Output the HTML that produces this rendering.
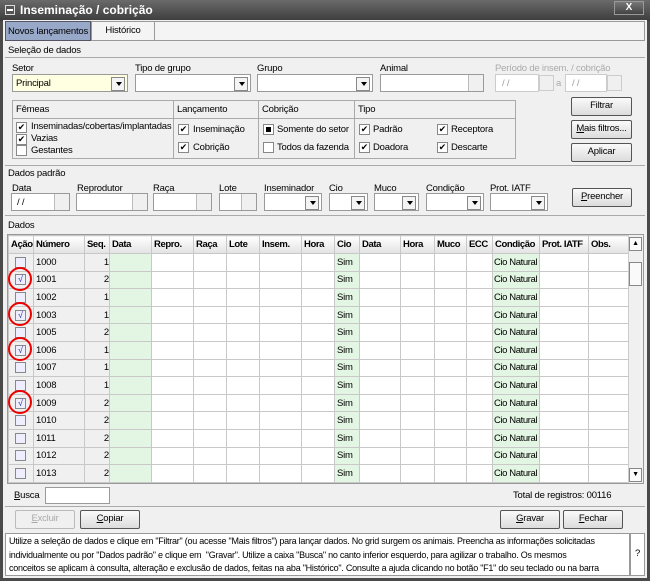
<!DOCTYPE html><html><head><meta charset="utf-8"><style>
*{box-sizing:border-box;margin:0;padding:0}
body{width:650px;height:581px;overflow:hidden;font-family:"Liberation Sans",Arial,sans-serif;font-size:9.5px;letter-spacing:-0.2px;color:#000;background:#4a4a4a;position:relative}
.a{position:absolute}
.win{left:3px;top:20px;width:644px;height:558px;background:#f0f0f0}
.tb{left:0;top:0;width:650px;height:21px;background:linear-gradient(#6a6a6a,#3c3c3c);color:#fff;font-size:12px;font-weight:bold;letter-spacing:0}
.lbl{position:absolute;white-space:nowrap}
.fld{position:absolute;background:#fff;border:1px solid #9a9a9a;height:18px;white-space:nowrap}
.cmb::after{content:"";position:absolute;right:2px;top:2px;width:12px;height:12px;background:#f4f4f4;border:1px solid #888}
.cmb::before{content:"";position:absolute;right:5px;top:7px;border-left:3px solid transparent;border-right:3px solid transparent;border-top:4px solid #000;z-index:2}
.sb{position:absolute;right:0;top:0;width:15px;height:16px;background:#f0f0f0;border-left:1px solid #bbb}
.btn{position:absolute;border:1px solid #555;border-radius:2px;background:linear-gradient(#fafafa,#dcdcdc);text-align:center;line-height:16px;height:19px;white-space:nowrap}
.cb{position:absolute;width:11px;height:11px;border:1px solid #888;background:#fff;font-size:9px;line-height:9px;text-align:center;letter-spacing:0}
.grp{position:absolute;border:1px solid #aaa}
table{border-collapse:collapse;position:absolute;left:8px;top:235px;width:620px;table-layout:fixed}
td,th{border:1px solid #c8c8c8;height:17.6px;padding:0 0 0 2px;white-space:nowrap;overflow:hidden}
th{background:linear-gradient(#fff,#e2e2e2);font-weight:bold;text-align:left;height:18px;letter-spacing:-0.4px}
td.g{background:#f0f0f0}td.gr{background:#e3f5e3}
td.cn{letter-spacing:-0.4px;padding-left:1px}
.circ{position:absolute;width:24px;height:24px;border:2px solid #e00;border-radius:50%}
</style></head><body>
<div class="a tb"><div class="a" style="left:5px;top:5px;width:10px;height:10px;border:1px solid #ddd;background:#555"></div><div class="a" style="left:7px;top:9px;width:6px;height:2px;background:#fff"></div><span class="a" style="left:20px;top:3px">Inseminação / cobrição</span>
<div class="a" style="left:614px;top:1px;width:30px;height:14px;border:1px solid #999;background:linear-gradient(#777,#444);text-align:center;font-size:10px;line-height:12px">X</div></div>
<div class="a win"></div>
<div class="a" style="left:5px;top:21px;width:640px;height:20px;background:#f4f4f4;border:1px solid #999"></div>
<div class="a" style="left:5px;top:21px;width:86px;height:20px;background:#98a8c8;border:1px solid #556;text-align:center;line-height:19px;white-space:nowrap">Novos lançamentos</div>
<div class="a" style="left:91px;top:21px;width:64px;height:20px;border:1px solid #999;text-align:center;line-height:18px">Histórico</div>
<div class="lbl" style="left:8px;top:45px">Seleção de dados</div>
<div class="a" style="left:5px;top:57px;width:640px;height:1px;background:#aaa"></div>
<div class="lbl" style="left:12px;top:63px">Setor</div>
<div class="lbl" style="left:135px;top:63px">Tipo de grupo</div>
<div class="lbl" style="left:257px;top:63px">Grupo</div>
<div class="lbl" style="left:380px;top:63px">Animal</div>
<div class="lbl" style="left:495px;top:63px;color:#aaa">Período de insem. / cobrição</div>
<div class="fld cmb" style="left:12px;top:74px;width:116px;background:#ffffe1;padding:3px 3px">Principal</div>
<div class="fld cmb" style="left:135px;top:74px;width:116px"></div>
<div class="fld cmb" style="left:257px;top:74px;width:116px"></div>
<div class="fld" style="left:380px;top:74px;width:104px"><div class="sb"></div></div>
<div class="fld" style="left:495px;top:74px;width:44px;border-color:#ccc;color:#999;padding:3px 6px">/ /<div class="sb" style="right:-16px;border:1px solid #ccc"></div></div>
<div class="lbl" style="left:556px;top:78px;color:#aaa">a</div>
<div class="fld" style="left:565px;top:74px;width:42px;border-color:#ccc;color:#999;padding:3px 6px">/ /<div class="sb" style="right:-16px;border:1px solid #ccc"></div></div>
<div class="grp" style="left:12px;top:100px;width:504px;height:59px"></div>
<div class="a" style="left:12px;top:118px;width:504px;height:1px;background:#aaa"></div>
<div class="a" style="left:173px;top:100px;width:1px;height:59px;background:#aaa"></div>
<div class="a" style="left:258px;top:100px;width:1px;height:59px;background:#aaa"></div>
<div class="a" style="left:354px;top:100px;width:1px;height:59px;background:#aaa"></div>
<div class="lbl" style="left:16px;top:104px">Fêmeas</div><div class="lbl" style="left:177px;top:104px">Lançamento</div><div class="lbl" style="left:262px;top:104px">Cobrição</div><div class="lbl" style="left:358px;top:104px">Tipo</div>
<div class="cb" style="left:16px;top:122px">✔</div><div class="lbl" style="left:31px;top:121px">Inseminadas/cobertas/implantadas</div>
<div class="cb" style="left:16px;top:134px">✔</div><div class="lbl" style="left:31px;top:133px">Vazias</div>
<div class="cb" style="left:16px;top:145px"></div><div class="lbl" style="left:31px;top:145px">Gestantes</div>
<div class="cb" style="left:178px;top:124px">✔</div><div class="lbl" style="left:193px;top:124px">Inseminação</div>
<div class="cb" style="left:178px;top:142px">✔</div><div class="lbl" style="left:193px;top:142px">Cobrição</div>
<div class="cb" style="left:263px;top:124px"><div style="width:5px;height:5px;background:#000;margin:2px"></div></div><div class="lbl" style="left:277px;top:124px">Somente do setor</div>
<div class="cb" style="left:263px;top:142px"></div><div class="lbl" style="left:277px;top:142px">Todos da fazenda</div>
<div class="cb" style="left:359px;top:124px">✔</div><div class="lbl" style="left:373px;top:124px">Padrão</div>
<div class="cb" style="left:359px;top:142px">✔</div><div class="lbl" style="left:373px;top:142px">Doadora</div>
<div class="cb" style="left:437px;top:124px">✔</div><div class="lbl" style="left:451px;top:124px">Receptora</div>
<div class="cb" style="left:437px;top:142px">✔</div><div class="lbl" style="left:451px;top:142px">Descarte</div>
<div class="btn" style="left:571px;top:97px;width:61px">Filtrar</div>
<div class="btn" style="left:571px;top:120px;width:61px"><u>M</u>ais filtros...</div>
<div class="btn" style="left:571px;top:143px;width:61px">Aplicar</div>
<div class="a" style="left:5px;top:165px;width:640px;height:1px;background:#aaa"></div>
<div class="lbl" style="left:8px;top:168px">Dados padrão</div>
<div class="lbl" style="left:12px;top:183px">Data</div><div class="lbl" style="left:77px;top:183px">Reprodutor</div><div class="lbl" style="left:153px;top:183px">Raça</div><div class="lbl" style="left:219px;top:183px">Lote</div><div class="lbl" style="left:264px;top:183px">Inseminador</div><div class="lbl" style="left:329px;top:183px">Cio</div><div class="lbl" style="left:374px;top:183px">Muco</div><div class="lbl" style="left:426px;top:183px">Condição</div><div class="lbl" style="left:490px;top:183px">Prot. IATF</div>
<div class="fld" style="left:11px;top:193px;width:59px;padding:3px 5px">/ /<div class="sb"></div></div>
<div class="fld" style="left:76px;top:193px;width:72px"><div class="sb"></div></div>
<div class="fld" style="left:153px;top:193px;width:59px"><div class="sb"></div></div>
<div class="fld" style="left:219px;top:193px;width:38px"><div class="sb"></div></div>
<div class="fld cmb" style="left:264px;top:193px;width:58px"></div>
<div class="fld cmb" style="left:329px;top:193px;width:39px"></div>
<div class="fld cmb" style="left:374px;top:193px;width:45px"></div>
<div class="fld cmb" style="left:426px;top:193px;width:58px"></div>
<div class="fld cmb" style="left:490px;top:193px;width:58px"></div>
<div class="btn" style="left:572px;top:188px;width:60px"><u>P</u>reencher</div>
<div class="a" style="left:5px;top:215px;width:640px;height:1px;background:#aaa"></div>
<div class="lbl" style="left:8px;top:220px">Dados</div>
<div class="a" style="left:7px;top:234px;width:637px;height:250px;background:#fff;border:1px solid #999"></div>
<table><colgroup><col style="width:25px"><col style="width:51px"><col style="width:25px"><col style="width:42px"><col style="width:42px"><col style="width:33px"><col style="width:33px"><col style="width:42px"><col style="width:33px"><col style="width:25px"><col style="width:41px"><col style="width:34px"><col style="width:32px"><col style="width:26px"><col style="width:47px"><col style="width:49px"><col style="width:40px"></colgroup>
<tr><th>Ação</th><th>Número</th><th>Seq.</th><th>Data</th><th>Repro.</th><th>Raça</th><th>Lote</th><th>Insem.</th><th>Hora</th><th>Cio</th><th>Data</th><th>Hora</th><th>Muco</th><th>ECC</th><th>Condição</th><th>Prot. IATF</th><th>Obs.</th></tr>
<tr><td class="g"><div class="cb" style="position:relative;left:4px;background:#eef"></div></td><td class="g">1000</td><td class="g" style="text-align:right">1</td><td class="gr"></td><td></td><td></td><td></td><td></td><td></td><td class="gr">Sim</td><td></td><td></td><td></td><td></td><td class="gr cn">Cio Natural</td><td></td><td></td></tr>
<tr><td class="g"><div class="cb" style="position:relative;left:4px;background:#eef;color:#339">√</div></td><td class="g">1001</td><td class="g" style="text-align:right">2</td><td class="gr"></td><td></td><td></td><td></td><td></td><td></td><td class="gr">Sim</td><td></td><td></td><td></td><td></td><td class="gr cn">Cio Natural</td><td></td><td></td></tr>
<tr><td class="g"><div class="cb" style="position:relative;left:4px;background:#eef"></div></td><td class="g">1002</td><td class="g" style="text-align:right">1</td><td class="gr"></td><td></td><td></td><td></td><td></td><td></td><td class="gr">Sim</td><td></td><td></td><td></td><td></td><td class="gr cn">Cio Natural</td><td></td><td></td></tr>
<tr><td class="g"><div class="cb" style="position:relative;left:4px;background:#eef;color:#339">√</div></td><td class="g">1003</td><td class="g" style="text-align:right">1</td><td class="gr"></td><td></td><td></td><td></td><td></td><td></td><td class="gr">Sim</td><td></td><td></td><td></td><td></td><td class="gr cn">Cio Natural</td><td></td><td></td></tr>
<tr><td class="g"><div class="cb" style="position:relative;left:4px;background:#eef"></div></td><td class="g">1005</td><td class="g" style="text-align:right">2</td><td class="gr"></td><td></td><td></td><td></td><td></td><td></td><td class="gr">Sim</td><td></td><td></td><td></td><td></td><td class="gr cn">Cio Natural</td><td></td><td></td></tr>
<tr><td class="g"><div class="cb" style="position:relative;left:4px;background:#eef;color:#339">√</div></td><td class="g">1006</td><td class="g" style="text-align:right">1</td><td class="gr"></td><td></td><td></td><td></td><td></td><td></td><td class="gr">Sim</td><td></td><td></td><td></td><td></td><td class="gr cn">Cio Natural</td><td></td><td></td></tr>
<tr><td class="g"><div class="cb" style="position:relative;left:4px;background:#eef"></div></td><td class="g">1007</td><td class="g" style="text-align:right">1</td><td class="gr"></td><td></td><td></td><td></td><td></td><td></td><td class="gr">Sim</td><td></td><td></td><td></td><td></td><td class="gr cn">Cio Natural</td><td></td><td></td></tr>
<tr><td class="g"><div class="cb" style="position:relative;left:4px;background:#eef"></div></td><td class="g">1008</td><td class="g" style="text-align:right">1</td><td class="gr"></td><td></td><td></td><td></td><td></td><td></td><td class="gr">Sim</td><td></td><td></td><td></td><td></td><td class="gr cn">Cio Natural</td><td></td><td></td></tr>
<tr><td class="g"><div class="cb" style="position:relative;left:4px;background:#eef;color:#339">√</div></td><td class="g">1009</td><td class="g" style="text-align:right">2</td><td class="gr"></td><td></td><td></td><td></td><td></td><td></td><td class="gr">Sim</td><td></td><td></td><td></td><td></td><td class="gr cn">Cio Natural</td><td></td><td></td></tr>
<tr><td class="g"><div class="cb" style="position:relative;left:4px;background:#eef"></div></td><td class="g">1010</td><td class="g" style="text-align:right">2</td><td class="gr"></td><td></td><td></td><td></td><td></td><td></td><td class="gr">Sim</td><td></td><td></td><td></td><td></td><td class="gr cn">Cio Natural</td><td></td><td></td></tr>
<tr><td class="g"><div class="cb" style="position:relative;left:4px;background:#eef"></div></td><td class="g">1011</td><td class="g" style="text-align:right">2</td><td class="gr"></td><td></td><td></td><td></td><td></td><td></td><td class="gr">Sim</td><td></td><td></td><td></td><td></td><td class="gr cn">Cio Natural</td><td></td><td></td></tr>
<tr><td class="g"><div class="cb" style="position:relative;left:4px;background:#eef"></div></td><td class="g">1012</td><td class="g" style="text-align:right">2</td><td class="gr"></td><td></td><td></td><td></td><td></td><td></td><td class="gr">Sim</td><td></td><td></td><td></td><td></td><td class="gr cn">Cio Natural</td><td></td><td></td></tr>
<tr><td class="g"><div class="cb" style="position:relative;left:4px;background:#eef"></div></td><td class="g">1013</td><td class="g" style="text-align:right">2</td><td class="gr"></td><td></td><td></td><td></td><td></td><td></td><td class="gr">Sim</td><td></td><td></td><td></td><td></td><td class="gr cn">Cio Natural</td><td></td><td></td></tr>
</table>
<div class="a" style="left:628px;top:235px;width:15px;height:248px;background:#f0f0f0;border-left:1px solid #ccc"></div>
<div class="a" style="left:629px;top:237px;width:13px;height:14px;border:1px solid #888;background:#fafafa;font-size:7px;text-align:center;line-height:12px">▲</div>
<div class="a" style="left:629px;top:262px;width:13px;height:24px;border:1px solid #888;background:#fafafa"></div>
<div class="a" style="left:629px;top:468px;width:13px;height:14px;border:1px solid #888;background:#fafafa;font-size:7px;text-align:center;line-height:12px">▼</div>
<div class="circ" style="left:8px;top:267px"></div>
<div class="circ" style="left:8px;top:302px"></div>
<div class="circ" style="left:8px;top:337px"></div>
<div class="circ" style="left:8px;top:390px"></div>
<div class="lbl" style="left:14px;top:490px"><u>B</u>usca</div>
<div class="fld" style="left:45px;top:487px;width:65px;height:17px"></div>
<div class="lbl" style="left:513px;top:490px">Total de registros: 00116</div>
<div class="a" style="left:5px;top:506px;width:640px;height:1px;background:#aaa"></div>
<div class="btn" style="left:15px;top:510px;width:60px;color:#aaa;border-color:#bbb;background:#f0f0f0"><u>E</u>xcluir</div>
<div class="btn" style="left:80px;top:510px;width:60px"><u>C</u>opiar</div>
<div class="btn" style="left:500px;top:510px;width:60px"><u>G</u>ravar</div>
<div class="btn" style="left:563px;top:510px;width:60px"><u>F</u>echar</div>
<div class="a" style="left:5px;top:533px;width:625px;height:43px;background:#fff;border:1px solid #999;padding:1px 3px;font-size:9px;letter-spacing:-0.25px;line-height:13.5px;overflow:hidden;white-space:nowrap">Utilize a seleção de dados e clique em "Filtrar" (ou acesse "Mais filtros") para lançar dados. No grid surgem os animais. Preencha as informações solicitadas<br>individualmente ou por "Dados padrão" e clique em &nbsp;"Gravar". Utilize a caixa "Busca" no canto inferior esquerdo, para agilizar o trabalho. Os mesmos<br>conceitos se aplicam à consulta, alteração e exclusão de dados, feitas na aba "Histórico". Consulte a ajuda clicando no botão "F1" do seu teclado ou na barra</div>
<div class="a" style="left:630px;top:533px;width:15px;height:43px;background:#fff;border:1px solid #999;text-align:center;line-height:40px">?</div>
</body></html>
